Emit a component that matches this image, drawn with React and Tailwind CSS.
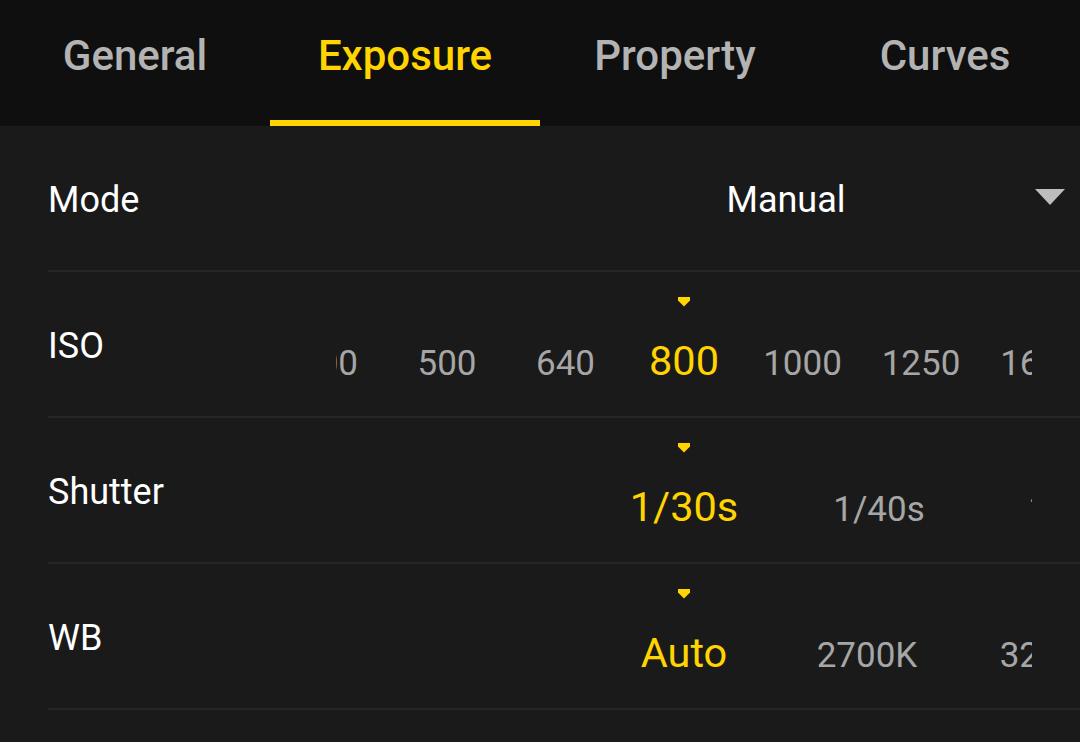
import { useState } from "react";

const tabs = ["General", "Exposure", "Property", "Curves"];

const wheels = [
  {
    label: "ISO",
    step: "w-[118.5px]",
    items: ["320", "400", "500", "640", "800", "1000", "1250", "1600", "2000"],
    selected: 4,
  },
  {
    label: "Shutter",
    step: "w-[195px]",
    items: ["", "", "1/30s", "1/40s", "1/50s"],
    selected: 2,
  },
  {
    label: "WB",
    step: "w-[183px]",
    items: ["", "", "Auto", "2700K", "3200K"],
    selected: 2,
  },
];

const Marker = () => (
  <svg width="12" height="10" viewBox="0 0 12 10" className="block">
    <path d="M0 0H12V3.5L6 9.5L0 3.5Z" fill="#ffd400" />
  </svg>
);

const Wheel = ({ label, step, items, selected }) => (
  <div className="flex h-[146px] border-b-2 border-[#262626]">
    <div className="w-[288px] self-center pt-1 text-[36px] text-white">{label}</div>
    <div className="flex w-[696px] flex-col items-center pt-[25px]">
      <Marker />
      <div className="mt-[30px] flex w-full items-baseline justify-center overflow-hidden leading-[48px]">
        {items.map((item, i) => (
          <div
            key={i}
            className={`${step} shrink-0 text-center ${
              i === selected ? "text-[41.5px] text-[#ffd400]" : "text-[35px] text-[#a6a6a6]"
            }`}
          >
            {item}
          </div>
        ))}
      </div>
    </div>
  </div>
);

const App = () => {
  const [active, setActive] = useState(1);

  return (
    <div
      className="min-h-screen bg-[#1a1a1a]"
      style={{ fontFamily: "Roboto, 'Noto Sans', sans-serif" }}
    >
      <div className="flex h-[126px] bg-[#0f0f0f]">
        {tabs.map((tab, i) => (
          <button
            key={tab}
            onClick={() => setActive(i)}
            className="flex flex-1 flex-col items-center justify-between pt-[32px] focus:outline-none"
          >
            <span
              className={`text-[42px] font-medium leading-[48px] ${
                i === active ? "text-[#ffd400]" : "text-[#b3b3b3]"
              }`}
            >
              {tab}
            </span>
            <span className={`h-[6px] w-full ${i === active ? "bg-[#ffd400]" : ""}`} />
          </button>
        ))}
      </div>

      <div className="pl-[48px]">
        <div className="flex h-[146px] items-center border-b-2 border-[#262626] pt-1">
          <div className="w-[620px] text-[36px] text-white">Mode</div>
          <div className="w-[236px] text-center text-[36px] text-white">Manual</div>
          <svg width="30" height="16" viewBox="0 0 30 16" className="ml-[131px] mb-[6px]">
            <path d="M0 0H30L15 16Z" fill="#bdbdbd" />
          </svg>
        </div>
        {wheels.map((w) => (
          <Wheel key={w.label} {...w} />
        ))}
      </div>
    </div>
  );
};

export default App;
